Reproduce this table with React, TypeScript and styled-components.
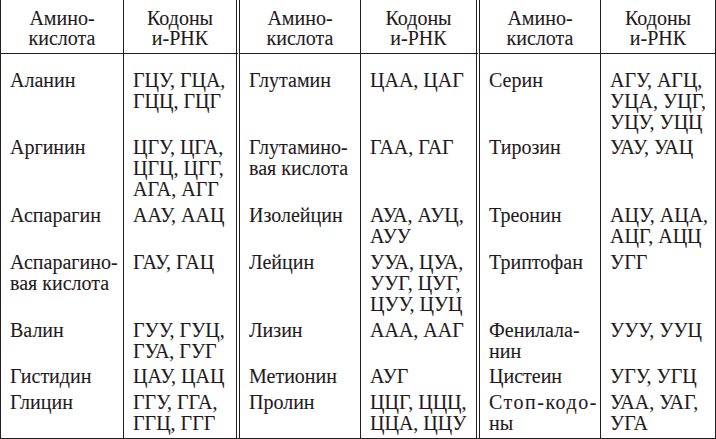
import React from "react";
import styled, { createGlobalStyle } from "styled-components";

const serif = `"Liberation Serif", "Times New Roman", serif`;

const GlobalStyle = createGlobalStyle`
  html, body {
    margin: 0;
    padding: 0;
    background: #ffffff;
  }
`;

type Entry = { name: string[]; codons: string[] };

const rows: Entry[][] = [
  [
    { name: ["Аланин"], codons: ["ГЦУ, ГЦА,", "ГЦЦ, ГЦГ"] },
    { name: ["Глутамин"], codons: ["ЦАА, ЦАГ"] },
    { name: ["Серин"], codons: ["АГУ, АГЦ,", "УЦА, УЦГ,", "УЦУ, УЦЦ"] },
  ],
  [
    { name: ["Аргинин"], codons: ["ЦГУ, ЦГА,", "ЦГЦ, ЦГГ,", "АГА, АГГ"] },
    { name: ["Глутамино-", "вая кислота"], codons: ["ГАА, ГАГ"] },
    { name: ["Тирозин"], codons: ["УАУ, УАЦ"] },
  ],
  [
    { name: ["Аспарагин"], codons: ["ААУ, ААЦ"] },
    { name: ["Изолейцин"], codons: ["АУА, АУЦ,", "АУУ"] },
    { name: ["Треонин"], codons: ["АЦУ, АЦА,", "АЦГ, АЦЦ"] },
  ],
  [
    { name: ["Аспарагино-", "вая кислота"], codons: ["ГАУ, ГАЦ"] },
    { name: ["Лейцин"], codons: ["УУА, ЦУА,", "УУГ, ЦУГ,", "ЦУУ, ЦУЦ"] },
    { name: ["Триптофан"], codons: ["УГГ"] },
  ],
  [
    { name: ["Валин"], codons: ["ГУУ, ГУЦ,", "ГУА, ГУГ"] },
    { name: ["Лизин"], codons: ["ААА, ААГ"] },
    { name: ["Фенилала-", "нин"], codons: ["УУУ, УУЦ"] },
  ],
  [
    { name: ["Гистидин"], codons: ["ЦАУ, ЦАЦ"] },
    { name: ["Метионин"], codons: ["АУГ"] },
    { name: ["Цистеин"], codons: ["УГУ, УГЦ"] },
  ],
  [
    { name: ["Глицин"], codons: ["ГГУ, ГГА,", "ГГЦ, ГГГ"] },
    { name: ["Пролин"], codons: ["ЦЦГ, ЦЦЦ,", "ЦЦА, ЦЦУ"] },
    { name: ["Стоп-кодо-", "ны"], codons: ["УАА, УАГ,", "УГА"] },
  ],
];

const Table = styled.div`
  display: grid;
  grid-template-columns: 123px 116px 121px 119px 121px 115px;
  width: 716px;
  box-sizing: border-box;
  border-left: 1px solid #231f20;
  border-bottom: 2px solid #231f20;
  color: #1f1b1c;
  font-family: ${serif};
  font-size: 20px;
  -webkit-text-stroke: 0.1px #231f20;
`;

const Cell = styled.div<{ $sep: "single" | "double"; $first?: boolean; $last?: boolean }>`
  box-sizing: border-box;
  border-right: ${(p) => (p.$sep === "double" ? "4px double #231f20" : "1px solid #231f20")};
  padding: ${(p) => (p.$first ? "15.5px" : "0")} 4px ${(p) => (p.$last ? "4px" : "4.8px")} 9px;
  line-height: 21px;
  white-space: nowrap;
`;

const HeadCell = styled.div<{ $sep: "single" | "double" }>`
  box-sizing: border-box;
  border-right: ${(p) => (p.$sep === "double" ? "4px double #231f20" : "1px solid #231f20")};
  border-bottom: 1px solid #231f20;
  padding: 8px 0 5px;
  line-height: 20px;
  text-align: center;
`;

const Line = styled.div<{ $spaced?: boolean }>`
  letter-spacing: ${(p) => (p.$spaced ? "1.5px" : "0")};
`;

const sepFor = (i: number): "single" | "double" => (i === 1 || i === 3 ? "double" : "single");

export default function App() {
  const heads = [0, 1, 2];
  return (
    <>
      <GlobalStyle />
      <Table>
        {heads.map((h) => (
          <React.Fragment key={h}>
            <HeadCell $sep={sepFor(h * 2)}>
              <Line>Амино-</Line>
              <Line>кислота</Line>
            </HeadCell>
            <HeadCell $sep={sepFor(h * 2 + 1)}>
              <Line>Кодоны</Line>
              <Line>и-РНК</Line>
            </HeadCell>
          </React.Fragment>
        ))}
        {rows.map((row, r) =>
          row.map((e, k) => (
            <React.Fragment key={`${r}-${k}`}>
              <Cell $sep={sepFor(k * 2)} $first={r === 0} $last={r === rows.length - 1}>
                {e.name.map((l) => (
                  <Line key={l} $spaced={l.startsWith("Стоп")}>
                    {l}
                  </Line>
                ))}
              </Cell>
              <Cell $sep={sepFor(k * 2 + 1)} $first={r === 0} $last={r === rows.length - 1}>
                {e.codons.map((l) => (
                  <Line key={l}>{l}</Line>
                ))}
              </Cell>
            </React.Fragment>
          ))
        )}
      </Table>
    </>
  );
}
